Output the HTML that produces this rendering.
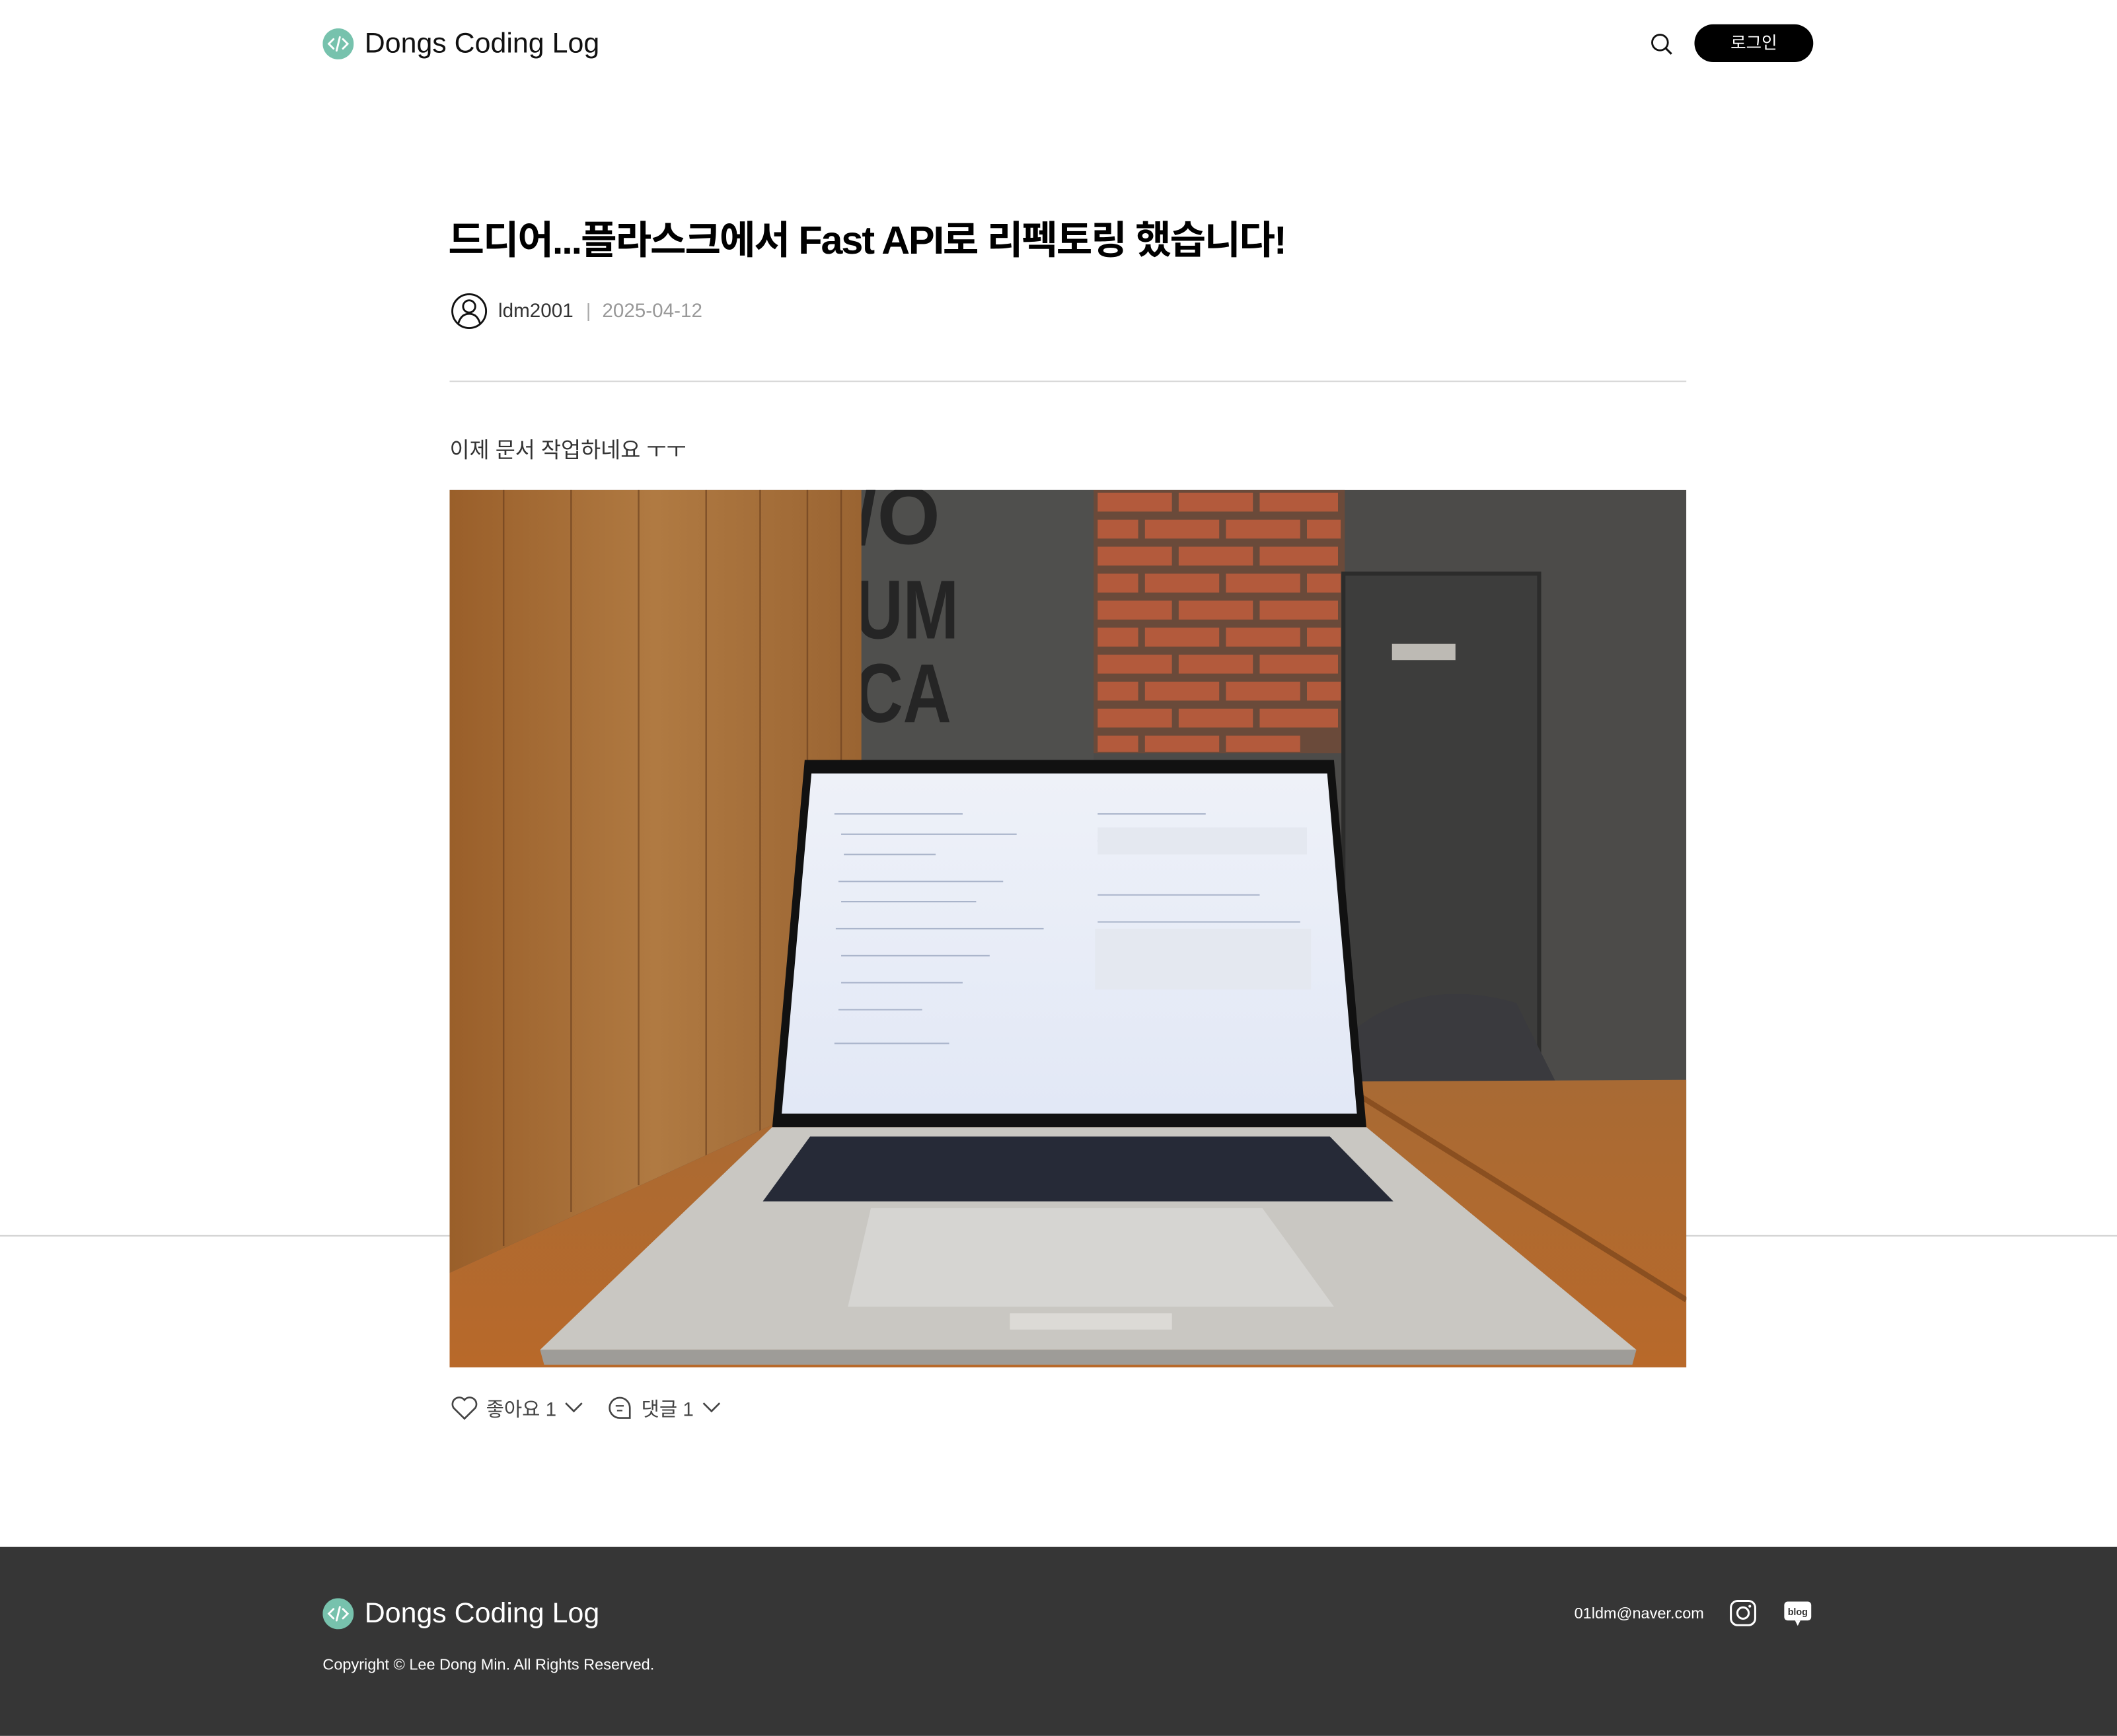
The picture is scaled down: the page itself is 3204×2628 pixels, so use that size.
<!DOCTYPE html>
<html><head><meta charset="utf-8">
<style>
html,body{margin:0;padding:0;background:#fff;}
body{width:3204px;height:2628px;overflow:hidden;position:relative;}
#s{position:absolute;left:0;top:0;width:1568px;height:1286px;transform:scale(2.0434);transform-origin:0 0;font-family:"Liberation Sans","Noto Sans CJK KR",sans-serif;}
.a{position:absolute;white-space:nowrap;}
</style></head><body><div id="s">
<div class="a" style="left:0;top:915px;width:1568px;height:1px;background:#cfcfcf"></div>
<svg class="a" style="left:239px;top:21px" width="23" height="23" viewBox="0 0 23 23"><circle cx="11.5" cy="11.5" r="11.5" fill="#77c2ad"/><path d="M8 8L4.5 11.5L8 15M15 8L18.5 11.5L15 15M12.7 6.5L10.3 16.5" stroke="#fff" stroke-width="1.4" fill="none" stroke-linecap="round"/></svg>
<div class="a" style="left:270px;top:21px;font-size:21px;color:#111;letter-spacing:0px">Dongs Coding Log</div>
<svg class="a" style="left:1222px;top:24px" width="18" height="18" viewBox="0 0 18 18"><circle cx="7.5" cy="7.5" r="5.8" stroke="#111" stroke-width="1.4" fill="none"/><path d="M11.8 11.8L16 16" stroke="#111" stroke-width="1.5"/></svg>
<div class="a" style="left:1255px;top:18px;width:88px;height:28px;border-radius:14px;background:#000;color:#fff;font-size:12.5px;text-align:center;line-height:28px">로그인</div>
<div class="a" style="left:332px;top:155px;font-size:29px;font-weight:bold;color:#000;letter-spacing:-1.0px">드디어...플라스크에서 Fast API로 리펙토링 했습니다!</div>
<svg class="a" style="left:334px;top:217px" width="27" height="27" viewBox="0 0 27 27"><circle cx="13.5" cy="13.5" r="12.5" stroke="#111" stroke-width="1.4" fill="none"/><circle cx="13.5" cy="10" r="4.5" stroke="#111" stroke-width="1.4" fill="none"/><path d="M5.5 22.5C7 17.5 10 15.5 13.5 15.5S20 17.5 21.5 22.5" stroke="#111" stroke-width="1.4" fill="none"/></svg>
<div class="a" style="left:369px;top:223px;font-size:14.5px;color:#333">ldm2001</div>
<div class="a" style="left:434px;top:222px;font-size:14px;color:#aaa">|</div>
<div class="a" style="left:446px;top:223px;font-size:14.5px;color:#999">2025-04-12</div>
<div class="a" style="left:333px;top:282px;width:916px;height:1px;background:#d8d8d8"></div>
<div class="a" style="left:333px;top:320px;font-size:16px;color:#333">이제 문서 작업하네요 ㅜㅜ</div>
<svg class="a" style="left:333px;top:363px" width="916" height="650" viewBox="0 0 916 650">
<defs>
<linearGradient id="w" x1="0" y1="0" x2="1" y2="0"><stop offset="0" stop-color="#9a5f2a"/><stop offset=".5" stop-color="#b07a42"/><stop offset="1" stop-color="#9a6432"/></linearGradient>
<linearGradient id="t" x1="0" y1="0" x2="0" y2="1"><stop offset="0" stop-color="#a86a34"/><stop offset="1" stop-color="#b8692a"/></linearGradient>
<linearGradient id="sc" x1="0" y1="0" x2="0" y2="1"><stop offset="0" stop-color="#eef1f8"/><stop offset="1" stop-color="#e2e8f6"/></linearGradient>
</defs>
<rect width="916" height="650" fill="#4c4b49"/>
<rect x="305" width="172" height="450" fill="#4f4f4d"/>
<text x="300" y="40" font-size="60" fill="#252525" font-family="Liberation Sans" font-weight="bold">/O</text>
<text x="300" y="110" font-size="62" fill="#252525" font-family="Liberation Sans" font-weight="bold" transform="translate(300 0) scale(0.8 1) translate(-300 0)">UM</text>
<text x="300" y="172" font-size="62" fill="#252525" font-family="Liberation Sans" font-weight="bold" transform="translate(300 0) scale(0.8 1) translate(-300 0)">CA</text>
<rect x="477" width="186" height="195" fill="#6a4a3a"/>
<g fill="#b35a3c">
<rect x="480" y="2" width="55" height="14"/><rect x="540" y="2" width="55" height="14"/><rect x="600" y="2" width="58" height="14"/>
<rect x="480" y="22" width="30" height="14"/><rect x="515" y="22" width="55" height="14"/><rect x="575" y="22" width="55" height="14"/><rect x="635" y="22" width="25" height="14"/>
<rect x="480" y="42" width="55" height="14"/><rect x="540" y="42" width="55" height="14"/><rect x="600" y="42" width="58" height="14"/>
<rect x="480" y="62" width="30" height="14"/><rect x="515" y="62" width="55" height="14"/><rect x="575" y="62" width="55" height="14"/><rect x="635" y="62" width="25" height="14"/>
<rect x="480" y="82" width="55" height="14"/><rect x="540" y="82" width="55" height="14"/><rect x="600" y="82" width="58" height="14"/>
<rect x="480" y="102" width="30" height="14"/><rect x="515" y="102" width="55" height="14"/><rect x="575" y="102" width="55" height="14"/><rect x="635" y="102" width="25" height="14"/>
<rect x="480" y="122" width="55" height="14"/><rect x="540" y="122" width="55" height="14"/><rect x="600" y="122" width="58" height="14"/>
<rect x="480" y="142" width="30" height="14"/><rect x="515" y="142" width="55" height="14"/><rect x="575" y="142" width="55" height="14"/><rect x="635" y="142" width="25" height="14"/>
<rect x="480" y="162" width="55" height="14"/><rect x="540" y="162" width="55" height="14"/><rect x="600" y="162" width="58" height="14"/>
<rect x="480" y="182" width="30" height="12"/><rect x="515" y="182" width="55" height="12"/><rect x="575" y="182" width="55" height="12"/>
</g>
<rect x="662" y="62" width="145" height="390" fill="#3d3d3c" stroke="#2c2c2b" stroke-width="3"/>
<rect x="698" y="114" width="47" height="12" fill="#bdbab4"/>
<path d="M670 400 Q720 360 790 380 L820 440 L670 445Z" fill="#3a3a3e"/>
<path d="M0 0H305V440L0 580Z" fill="url(#w)"/>
<g stroke="#6e4220" stroke-width="1.2" opacity=".7"><path d="M40 0V560M90 0V535M140 0V515M190 0V495M230 0V475M265 0V458M290 0V447"/></g>
<path d="M0 580L305 440L916 437V650H0Z" fill="url(#t)"/>
<path d="M305 440L580 438" stroke="#7a4a22" stroke-width="2"/>
<path d="M660 440L916 600" stroke="#8a4f20" stroke-width="4"/>
<path d="M67 637L239 472H679L879 637Z" fill="#c9c7c2"/>
<path d="M67 637H879L876 648H70Z" fill="#9e9c98"/>
<rect x="415" y="610" width="120" height="12" fill="#dcdad6"/>
<path d="M267 479H652L699 527H232Z" fill="#262a37"/>
<path d="M312 532H602L655 605H295Z" fill="#d6d5d2"/>
<path d="M263 200H655L679 472H239Z" fill="#111"/>
<path d="M268 210H650L672 462H246Z" fill="url(#sc)"/>
<g stroke="#9aa6c0" stroke-width="1" opacity=".8"><path d="M285 240H380M290 255H420M292 270H360M288 290H410M290 305H390M286 325H440M290 345H400M290 365H380M288 385H350M285 410H370M480 240H560M480 260H620M480 300H600M480 320H630M480 345H560M480 365H620"/></g>
<rect x="480" y="250" width="155" height="20" fill="#e4e8f0"/>
<rect x="478" y="325" width="160" height="45" fill="#e4e8f0"/>
</svg>
<svg class="a" style="left:334px;top:1034px" width="20" height="18" viewBox="0 0 20 18"><path d="M10 17L2.2 9.3A4.6 4.6 0 0 1 10 3.2A4.6 4.6 0 0 1 17.8 9.3Z" stroke="#444" stroke-width="1.3" fill="none"/></svg>
<div class="a" style="left:360px;top:1033px;font-size:14.5px;color:#444">좋아요 1</div>
<svg class="a" style="left:418px;top:1038px" width="14" height="9" viewBox="0 0 14 9"><path d="M1 1.5L7 7.5L13 1.5" stroke="#444" stroke-width="1.3" fill="none"/></svg>
<svg class="a" style="left:450px;top:1034px" width="18" height="18" viewBox="0 0 18 18"><path d="M16.5 16.5H9A7.5 7.5 0 1 1 16.5 9Z" stroke="#444" stroke-width="1.3" fill="none"/><path d="M6 7.5H12M7 11H11" stroke="#444" stroke-width="1.1"/></svg>
<div class="a" style="left:475px;top:1033px;font-size:14.5px;color:#444">댓글 1</div>
<svg class="a" style="left:520px;top:1038px" width="14" height="9" viewBox="0 0 14 9"><path d="M1 1.5L7 7.5L13 1.5" stroke="#444" stroke-width="1.3" fill="none"/></svg>
<div class="a" style="left:0;top:1146px;width:1568px;height:140px;background:#363636"></div>
<svg class="a" style="left:239px;top:1184px" width="23" height="23" viewBox="0 0 23 23"><circle cx="11.5" cy="11.5" r="11.5" fill="#77c2ad"/><path d="M8 8L4.5 11.5L8 15M15 8L18.5 11.5L15 15M12.7 6.5L10.3 16.5" stroke="#fff" stroke-width="1.4" fill="none" stroke-linecap="round"/></svg>
<div class="a" style="left:270px;top:1184px;font-size:21px;color:#fff">Dongs Coding Log</div>
<div class="a" style="left:239px;top:1228px;font-size:11.5px;color:#fff">Copyright © Lee Dong Min. All Rights Reserved.</div>
<div class="a" style="left:1166px;top:1190px;font-size:11.5px;color:#fff">01ldm@naver.com</div>
<svg class="a" style="left:1281px;top:1185px" width="20" height="20" viewBox="0 0 20 20"><rect x="1" y="1" width="18" height="18" rx="5" stroke="#fff" stroke-width="1.5" fill="none"/><circle cx="10" cy="10" r="4.2" stroke="#fff" stroke-width="1.5" fill="none"/><circle cx="15" cy="5" r="1" fill="#fff"/></svg>
<svg class="a" style="left:1321px;top:1186px" width="21" height="19" viewBox="0 0 21 19"><rect x="0.5" y="0.5" width="20" height="14" rx="2.5" fill="#fff"/><path d="M8.5 14.5L10.5 18.5L12.5 14.5Z" fill="#fff"/><text x="10.5" y="10.5" font-size="7" font-weight="bold" text-anchor="middle" fill="#333" font-family="Liberation Sans">blog</text></svg>
</div></body></html>
